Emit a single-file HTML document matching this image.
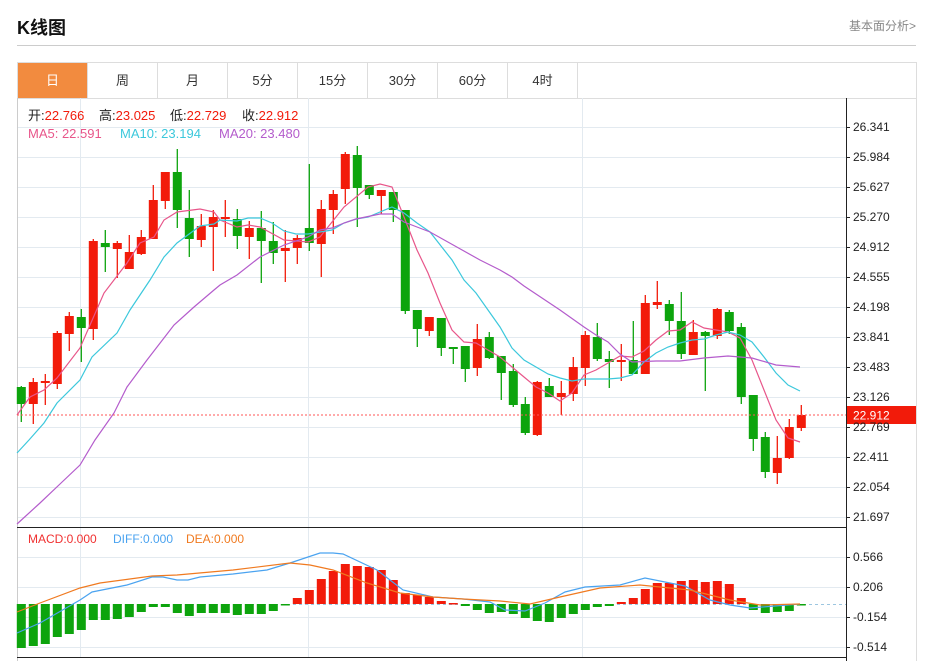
<!DOCTYPE html>
<html><head><meta charset="utf-8">
<style>
*{margin:0;padding:0;box-sizing:border-box}
body{width:926px;height:661px;background:#fff;font-family:"Liberation Sans","Noto Sans CJK SC",sans-serif;position:relative;overflow:hidden}
.h{position:absolute;left:17px;top:14px;font-size:18px;font-weight:bold;color:#111}
.more{position:absolute;right:10px;top:17px;font-size:12px;color:#888}
.hl{position:absolute;left:17px;top:45px;width:899px;height:1px;background:#ccc}
.tabs{position:absolute;left:17px;top:62px;width:900px;height:37px;border:1px solid #ddd;border-bottom:1px solid #ddd}
.tab{position:absolute;top:0;width:70px;height:35px;line-height:35px;text-align:center;font-size:13px;color:#333;border-right:1px solid #ddd}
.tab.a{background:#f28b3f;color:#fff}
svg{position:absolute;left:0;top:0}
</style></head><body>
<div class="h">K线图</div>
<div class="more">基本面分析&gt;</div>
<div class="hl"></div>
<div class="tabs">
<div class="tab a" style="left:0">日</div>
<div class="tab" style="left:70px">周</div>
<div class="tab" style="left:140px">月</div>
<div class="tab" style="left:210px">5分</div>
<div class="tab" style="left:280px">15分</div>
<div class="tab" style="left:350px">30分</div>
<div class="tab" style="left:420px">60分</div>
<div class="tab" style="left:490px">4时</div>
</div>
<svg id="c" width="926" height="661" xmlns="http://www.w3.org/2000/svg" font-family="Liberation Sans, Noto Sans CJK SC, sans-serif">
<g id="grid" stroke="#e3eaf0" stroke-width="1"></g>
<line x1="17.5" y1="98" x2="17.5" y2="661" stroke="#ccc"/>
<line x1="916.5" y1="98" x2="916.5" y2="661" stroke="#ddd"/>
<g id="cand"></g>
<g id="ma" fill="none" stroke-width="1.2"></g>
<line x1="17" y1="415" x2="846" y2="415" stroke="#f55" stroke-dasharray="2,2"/>
<rect x="847" y="406" width="69" height="18" fill="#f21b0a"/>
<text x="853" y="419.5" font-size="12" fill="#fff">22.912</text>
<line x1="846.5" y1="98" x2="846.5" y2="661" stroke="#222"/>
<line x1="17" y1="527.5" x2="846" y2="527.5" stroke="#222"/>
<line x1="17" y1="657.5" x2="846" y2="657.5" stroke="#222"/>
<g id="lab" font-size="12" fill="#222"></g>
<g font-size="13">
<text x="28" y="120" fill="#222">开:<tspan fill="#f21b0a">22.766</tspan></text>
<text x="99" y="120" fill="#222">高:<tspan fill="#f21b0a">23.025</tspan></text>
<text x="170" y="120" fill="#222">低:<tspan fill="#f21b0a">22.729</tspan></text>
<text x="242" y="120" fill="#222">收:<tspan fill="#f21b0a">22.912</tspan></text>
<text x="28" y="138" fill="#e8568a">MA5: 22.591</text>
<text x="120" y="138" fill="#3cc8dc">MA10: 23.194</text>
<text x="219" y="138" fill="#b45ccc">MA20: 23.480</text>
<text x="28" y="543" fill="#f03030" font-size="12">MACD:0.000</text>
<text x="113" y="543" fill="#4aa3f0" font-size="12">DIFF:0.000</text>
<text x="186" y="543" fill="#f07a20" font-size="12">DEA:0.000</text>
</g>
</svg>
<script>
var NS="http://www.w3.org/2000/svg";
function el(p,t,a){var e=document.createElementNS(NS,t);for(var k in a)e.setAttribute(k,a[k]);document.getElementById(p).appendChild(e);return e;}
var G=[127,157,187,217,247,277,307,337,367,397,427,457,487,517,557,587,617,647];
G.forEach(function(y){el("grid","line",{x1:17,x2:846,y1:y+.5,y2:y+.5});});
[80,308,582].forEach(function(x){el("grid","line",{x1:x+.5,x2:x+.5,y1:98,y2:657});});
el("grid","line",{x1:17,x2:846,y1:604.5,y2:604.5,stroke:"#9cc6e0","stroke-dasharray":"3,3"});
var L=["26.341","25.984","25.627","25.270","24.912","24.555","24.198","23.841","23.483","23.126","22.769","22.411","22.054","21.697","0.566","0.206","-0.154","-0.514"];
G.forEach(function(y,i){el("lab","line",{x1:846,x2:850,y1:y+.5,y2:y+.5,stroke:"#222"});var t=el("lab","text",{x:853,y:y+4});t.textContent=L[i];});
var C=[[387,404,386,422,0],[382,404,378,424,1],[381,383,374,405,1],[333,384,331,389,1],[316,334,312,351,1],[317,328,309,362,0],[241,329,239,340,1],[243,247,230,272,0],[243,249,241,278,1],[252,269,235,269,1],[237,254,230,255,1],[200,239,185,239,1],[172,201,172,209,1],[172,210,149,228,0],[218,239,190,257,0],[226,240,214,247,1],[217,227,210,271,1],[217,219,200,237,1],[219,236,209,249,0],[228,237,221,259,1],[228,241,211,283,0],[241,253,222,264,0],[248,251,230,282,1],[238,248,235,264,1],[228,243,164,251,0],[209,244,200,277,1],[194,210,190,234,1],[154,189,152,204,1],[155,188,146,227,0],[185,195,185,199,0],[190,196,190,214,1],[192,210,192,222,0],[210,311,210,314,0],[310,329,310,347,0],[317,331,317,336,1],[318,348,318,356,0],[347,348,347,364,0],[346,369,346,382,0],[339,368,324,376,1],[337,358,332,359,0],[356,373,356,400,0],[371,405,364,407,0],[404,433,397,435,0],[382,435,381,436,1],[386,397,378,397,0],[393,397,381,415,1],[367,394,357,401,1],[335,368,331,386,1],[337,359,323,361,0],[359,362,351,388,0],[360,362,344,381,1],[360,374,321,374,0],[303,374,295,374,1],[302,305,281,309,1],[304,321,300,335,0],[321,354,292,359,0],[332,355,320,355,1],[332,336,331,391,0],[309,336,308,339,1],[312,331,310,334,0],[327,397,323,404,0],[395,439,395,451,0],[437,472,432,478,0],[458,473,436,484,1],[427,458,419,459,1],[415,428,405,431,1]];
var M=[648,646,644,637,634,630,620,620,619,617,612,607,607,613,616,613,613,613,615,614,614,611,605,598,590,579,571,564,566,567,570,580,593,595,597,601,603,606,610,613,612,614,618,621,622,618,614,610,607,606,602,598,589,583,583,581,580,582,581,584,598,610,613,612,611,604];
C.forEach(function(c,i){var x=21.3+12*i,col=c[4]?"#f21b0a":"#0da40d";
el("cand","line",{x1:x,x2:x,y1:c[2],y2:c[3],stroke:col,"stroke-width":1.3});
el("cand","rect",{x:x-4.5,y:c[0],width:9,height:Math.max(2,c[1]-c[0]),fill:col});
var m=M[i],top=Math.min(m,604),h=Math.max(1.5,Math.abs(m-604));
el("cand","rect",{x:x-4.5,y:top,width:9,height:h,fill:m<604?"#f21b0a":"#0da40d"});});
function pl(pts,col){el("ma","polyline",{points:pts,stroke:col});}
pl("17,415 30,397 44,390 57,378 80,348 104,293 127,263 140,243 154,237 164,220 177,212 200,209 214,212 220,220 237,227 248,225 260,227 284,240 308,242 320,237 332,222 344,207 368,187 380,184 392,187 404,217 417,250 428,273 440,303 452,330 464,342 476,343 488,350 500,357 512,367 524,377 536,387 548,393 560,401 572,393 584,375 596,370 608,363 620,356 632,357 644,351 656,340 668,331 680,330 692,322 704,328 716,330 728,332 740,338 752,360 764,390 776,420 788,438 800,442","#e8568a");
pl("17,453 29,440 44,423 57,403 80,380 92,357 117,333 130,310 150,280 164,257 177,243 200,226 214,224 220,220 237,221 248,218 260,218 272,223 284,231 296,234 308,234 320,232 332,230 344,223 356,219 368,217 380,212 392,207 404,213 417,223 430,232 452,260 464,280 476,293 488,310 500,327 512,348 524,360 536,367 548,374 560,378 572,381 584,379 596,379 608,379 620,378 632,375 644,362 656,353 668,347 680,343 692,340 704,339 716,335 728,332 740,335 752,342 764,357 776,373 788,385 800,391","#3cc8dc");
pl("17,524 40,503 60,484 80,465 95,440 114,413 127,387 147,360 174,325 194,307 214,290 220,285 237,275 260,257 284,245 308,237 320,230 332,228 344,223 356,219 380,214 392,214 404,222 417,227 430,232 455,246 480,260 500,270 512,277 524,286 548,302 560,310 584,327 596,335 608,342 620,354 632,362 656,361 680,361 704,358 728,356 752,358 776,365 800,367","#b45ccc");
pl("17,633 40,623 80,600 92,592 127,585 152,577 163,577 177,580 188,580 200,577 233,574 267,570 290,563 320,553 333,553 343,554 377,570 403,590 433,597 463,599 490,602 505,610 525,611 545,603 565,592 585,587 620,585 645,578 665,582 685,586 710,600 730,605 750,608 775,606 800,604","#4aa3f0");
pl("17,612 40,603 80,588 100,583 152,576 177,575 233,570 290,563 310,565 333,570 367,583 400,593 433,597 463,599 500,601 530,604 560,597 600,588 640,585 690,590 730,600 760,605 800,604","#f07a20");
</script>
</body></html>
